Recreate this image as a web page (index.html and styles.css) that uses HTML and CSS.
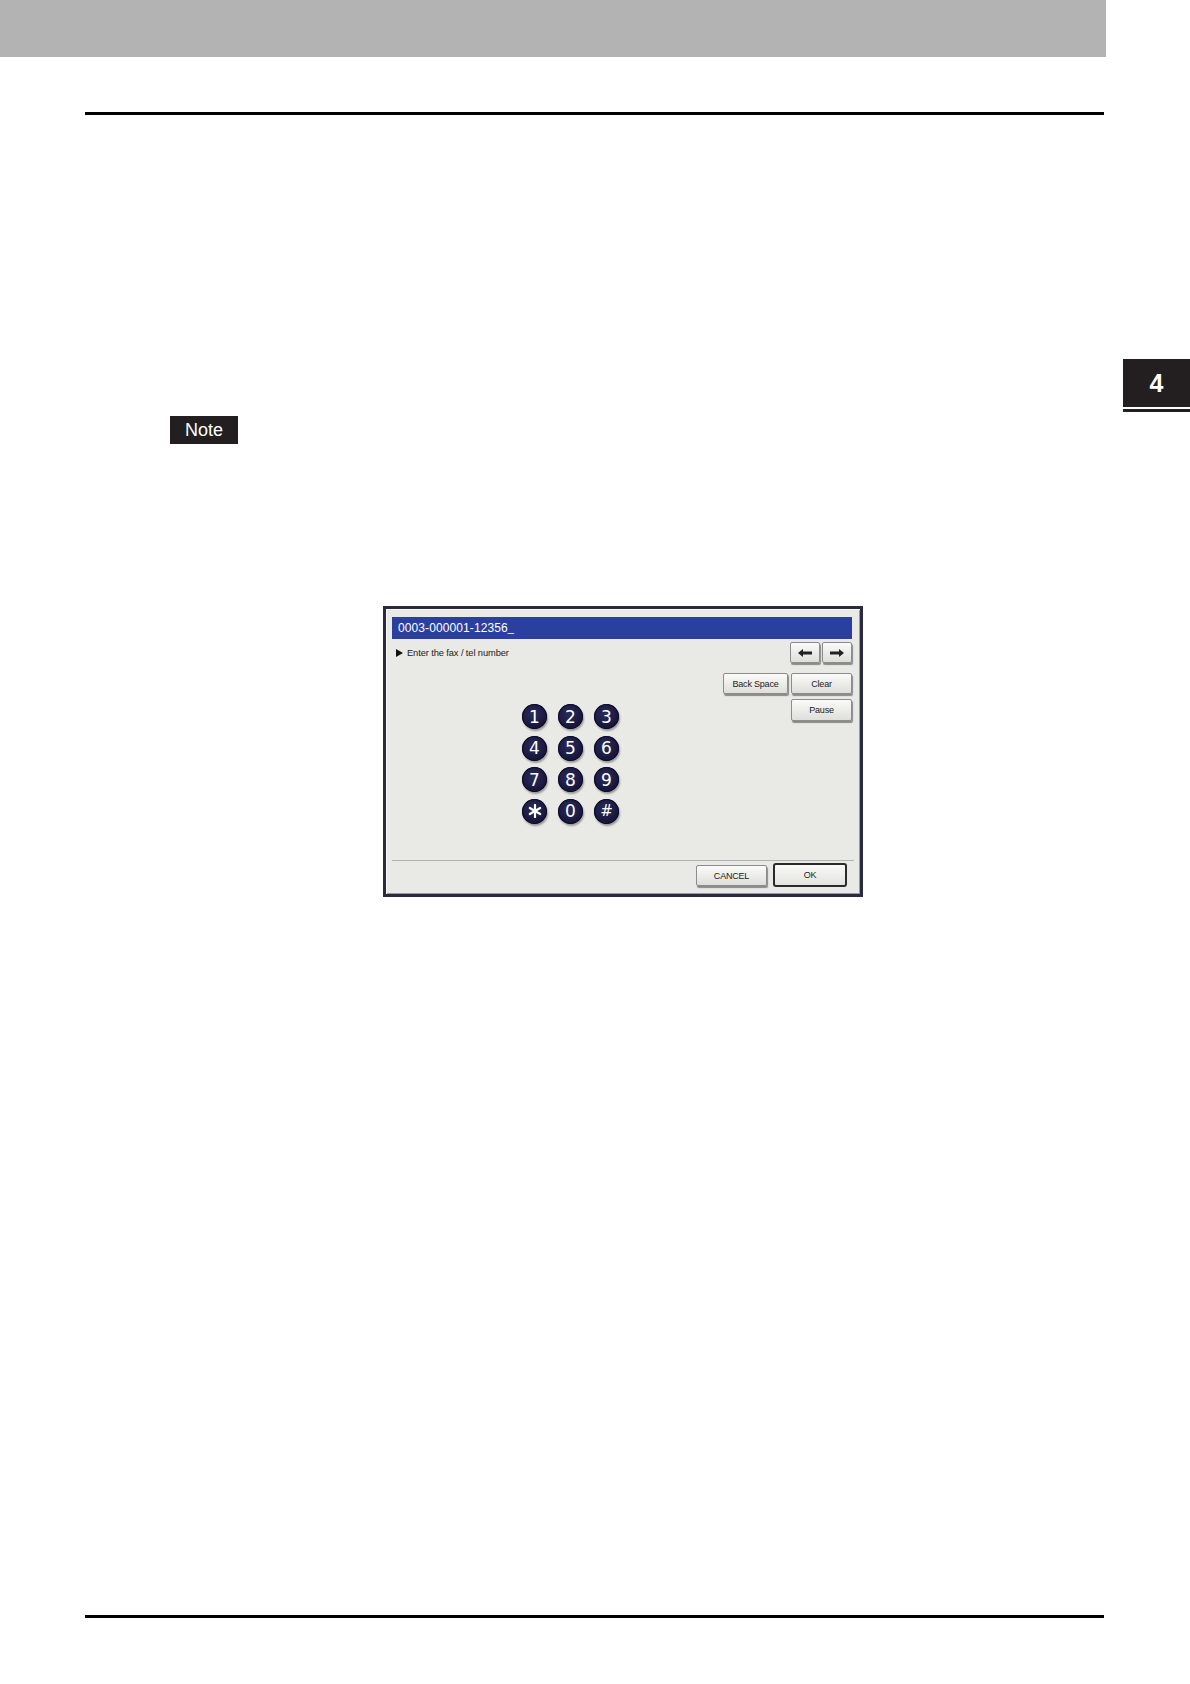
FILE: index.html
```html
<!DOCTYPE html>
<html>
<head>
<meta charset="utf-8">
<link rel="stylesheet" href="styles.css">
</head>
<body>
<div class="header"></div>
<div class="page">
  <div class="rule"></div>
  <div class="chapter-tab"><span>4</span></div>
  <div class="note">Note</div>
  <div class="dlg">
    <div class="field">0003-000001-12356<span class="cursor">_</span></div>
    <div class="inst-row">
      <div class="inst"><span class="tri"></span>Enter the fax / tel number</div>
      <div class="arrows">
        <div class="btn arrow"><svg width="14" height="8" viewBox="0 0 14 8"><path d="M0 4 L5 0 L5 2.6 L14 2.6 L14 5.4 L5 5.4 L5 8 Z" fill="#222"/></svg></div>
        <div class="btn arrow"><svg width="14" height="8" viewBox="0 0 14 8"><path d="M14 4 L9 0 L9 2.6 L0 2.6 L0 5.4 L9 5.4 L9 8 Z" fill="#222"/></svg></div>
      </div>
    </div>
    <div class="middle">
      <div class="keypad">
        <div class="key">1</div><div class="key">2</div><div class="key">3</div>
        <div class="key">4</div><div class="key">5</div><div class="key">6</div>
        <div class="key">7</div><div class="key">8</div><div class="key">9</div>
        <div class="key"><svg width="14" height="14" viewBox="0 0 14 14"><g stroke="#fff" stroke-width="2.2" stroke-linecap="round"><line x1="7" y1="1" x2="7" y2="13"/><line x1="1.8" y1="4" x2="12.2" y2="10"/><line x1="1.8" y1="10" x2="12.2" y2="4"/></g></svg></div>
        <div class="key">0</div>
        <div class="key hash">#</div>
      </div>
      <div class="side">
        <div class="btn bs">Back Space</div>
        <div class="btn clr">Clear</div>
        <div class="btn clr pause">Pause</div>
      </div>
    </div>
    <div class="footer">
      <div class="btn cancel">CANCEL</div>
      <div class="btn ok">OK</div>
    </div>
  </div>
  <div class="rule bottom"></div>
</div>
</body>
</html>
```

FILE: styles.css
```css
html, body {
  margin: 0;
  padding: 0;
  background: #fff;
}
body {
  width: 1190px;
  height: 1684px;
  position: relative;
  font-family: "Liberation Sans", Arial, sans-serif;
  overflow: hidden;
}
.header {
  width: 1106px;
  height: 57px;
  background: #b3b3b3;
}
.page {
  padding-left: 85px;
}
.rule {
  width: 1019px;
  height: 3px;
  background: #000;
  margin-top: 55px;
}
.rule.bottom {
  margin-top: 718px;
}
.chapter-tab {
  position: absolute;
  left: 1123px;
  top: 359px;
  width: 67px;
  height: 48px;
  border-bottom: 2px solid #fff;
  box-shadow: 0 3px 0 0 #231f20;
}
.chapter-tab span {
  display: flex;
  align-items: center;
  justify-content: center;
  height: 48px;
  background: #231f20;
  color: #fff;
  font-weight: bold;
  font-size: 25px;
}
.note {
  margin-left: 85px;
  margin-top: 301px;
  width: 68px;
  height: 28px;
  background: #231f20;
  color: #fff;
  font-size: 18px;
  line-height: 28px;
  text-align: center;
}
.dlg {
  margin-left: 298px;
  margin-top: 162px;
  width: 480px;
  height: 291px;
  box-sizing: border-box;
  border: 3px solid #2a2a40;
  box-shadow: inset 1px 1px 0 #fafafa, inset -1px -1px 0 #9a9aa0;
  background: #e9e9e5;
  padding: 8px 8px 0 6px;
  display: flex;
  flex-direction: column;
}
.field {
  height: 22px;
  background: #2b3f9e;
  color: #fff;
  font-size: 12px;
  line-height: 22px;
  padding-left: 6px;
  letter-spacing: 0.1px;
}
.cursor {
  font-size: 11px;
}
.inst-row {
  display: flex;
  justify-content: space-between;
  align-items: center;
  margin-top: 3px;
  height: 21px;
}
.inst {
  font-size: 9.3px;
  color: #222;
  padding-left: 4px;
  display: flex;
  align-items: center;
  letter-spacing: -0.1px;
}
.tri {
  display: inline-block;
  width: 0;
  height: 0;
  border-left: 7px solid #111;
  border-top: 4px solid transparent;
  border-bottom: 4px solid transparent;
  margin-right: 4px;
}
.arrows {
  display: flex;
  gap: 2px;
}
.btn {
  box-sizing: border-box;
  background: linear-gradient(#fbfbf9, #dededa);
  border: 1px solid #8c8c8c;
  border-radius: 2px;
  box-shadow: 1px 2px 1px rgba(60, 60, 60, 0.55);
  font-size: 9px;
  color: #222;
  display: flex;
  align-items: center;
  justify-content: center;
  letter-spacing: -0.2px;
}
.arrow {
  width: 30px;
  height: 21px;
}
.middle {
  flex: 1;
  display: flex;
  justify-content: space-between;
  align-items: flex-start;
}
.keypad {
  margin-left: 130px;
  margin-top: 41px;
  display: grid;
  grid-template-columns: repeat(3, 25px);
  grid-auto-rows: 25px;
  column-gap: 11px;
  row-gap: 6.5px;
}
.key {
  width: 25px;
  height: 25px;
  border-radius: 50%;
  background: radial-gradient(circle at 45% 40%, #2c2c5a, #15153a 70%);
  box-shadow: 1px 2px 2px rgba(0, 0, 0, 0.35), inset 0 0 0 1px #0c0c28;
  color: #fff;
  font-family: "DejaVu Sans", sans-serif;
  font-size: 17px;
  display: flex;
  align-items: center;
  justify-content: center;
}
.key.hash {
  font-size: 15px;
}
.side {
  margin-top: 10px;
  display: grid;
  grid-template-columns: 65px 61px;
  column-gap: 3px;
  row-gap: 5px;
}
.bs, .clr {
  height: 21px;
}
.pause {
  grid-column: 2;
  height: 22px;
}
.footer {
  border-top: 1px solid #b2b2b2;
  margin-right: -2px;
  height: 34px;
  box-sizing: border-box;
  display: flex;
  justify-content: flex-end;
  align-items: flex-start;
  padding-top: 2px;
  padding-right: 7px;
  gap: 6px;
}
.cancel {
  width: 71px;
  height: 21px;
  margin-top: 2px;
}
.ok {
  width: 74px;
  height: 24px;
  border: 2px solid #2a2a2a;
  border-radius: 3px;
  box-shadow: none;
  background: linear-gradient(#fafaf8, #e2e2de);
}
```
